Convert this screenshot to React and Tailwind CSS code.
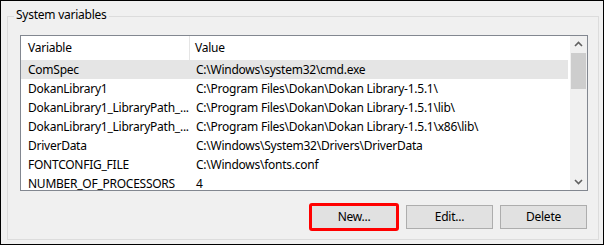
import React from "react";

const rows = [
  { name: "ComSpec", value: "C:\\Windows\\system32\\cmd.exe", selected: true },
  { name: "DokanLibrary1", value: "C:\\Program Files\\Dokan\\Dokan Library-1.5.1\\" },
  { name: "DokanLibrary1_LibraryPath_...", value: "C:\\Program Files\\Dokan\\Dokan Library-1.5.1\\lib\\" },
  { name: "DokanLibrary1_LibraryPath_...", value: "C:\\Program Files\\Dokan\\Dokan Library-1.5.1\\x86\\lib\\" },
  { name: "DriverData", value: "C:\\Windows\\System32\\Drivers\\DriverData" },
  { name: "FONTCONFIG_FILE", value: "C:\\Windows\\fonts.conf" },
  { name: "NUMBER_OF_PROCESSORS", value: "4" },
];

const Chevron = ({ down }) => (
  <svg width="17" height="17" viewBox="0 0 17 17" className="block">
    <path
      d={down ? "M5 7 L8.5 10.5 L12 7" : "M5 10 L8.5 6.5 L12 10"}
      fill="none"
      stroke="#606060"
      strokeWidth="1.6"
    />
  </svg>
);

export default function App() {
  return (
    <div
      className="w-[604px] h-[245px] border border-black bg-[#f0f0f0] pt-[15px] pl-[6px] pr-[4px] text-[12px] tracking-[-0.25px] text-black"
      style={{ fontFamily: '"Noto Sans", "Open Sans", sans-serif' }}
    >
      {/* System variables group */}
      <div className="relative border border-[#dcdcdc] pt-[18px] pl-[12px] pr-[10px] pb-[8px]">
        <span className="absolute left-[6px] top-[-10px] px-[2px] leading-[16px] bg-[#f0f0f0]">
          System variables
        </span>

        {/* list view */}
        <div className="h-[156px] border border-[#828790] bg-white flex overflow-hidden">
          <div className="flex-1 flex flex-col overflow-hidden">
            <div className="flex h-[24px] shrink-0 items-center">
              <div className="w-[169px] h-full flex items-center pl-[7px] border-r border-[#e5e5e5]">
                Variable
              </div>
              <div className="pl-[5px]">Value</div>
            </div>
            {rows.map((r, i) => (
              <div
                key={i}
                className={
                  "flex h-[19px] shrink-0 items-center mr-[2px] " +
                  (r.selected ? "bg-[#e5e5e5]" : "")
                }
              >
                <div className="w-[169px] shrink-0 pl-[7px] whitespace-nowrap">{r.name}</div>
                <div className="pl-[6px] whitespace-nowrap">{r.value}</div>
              </div>
            ))}
          </div>

          {/* scrollbar */}
          <div className="w-[17px] shrink-0 bg-[#f0f0f0] flex flex-col">
            <Chevron />
            <div className="mx-[1px] h-[36px] bg-[#cdcdcd]" />
            <div className="flex-1" />
            <Chevron down />
          </div>
        </div>

        {/* buttons */}
        <div className="mt-[12px] flex justify-end items-center gap-[7px] pr-[1px]">
          <button className="w-[90px] h-[28px] rounded-[3px] border-[3px] border-[#ff0000] bg-[#e1e1e1]">
            New...
          </button>
          <button className="w-[87px] h-[24px] border border-[#adadad] bg-[#e1e1e1]">
            Edit...
          </button>
          <button className="w-[87px] h-[24px] border border-[#adadad] bg-[#e1e1e1]">
            Delete
          </button>
        </div>
      </div>
    </div>
  );
}
